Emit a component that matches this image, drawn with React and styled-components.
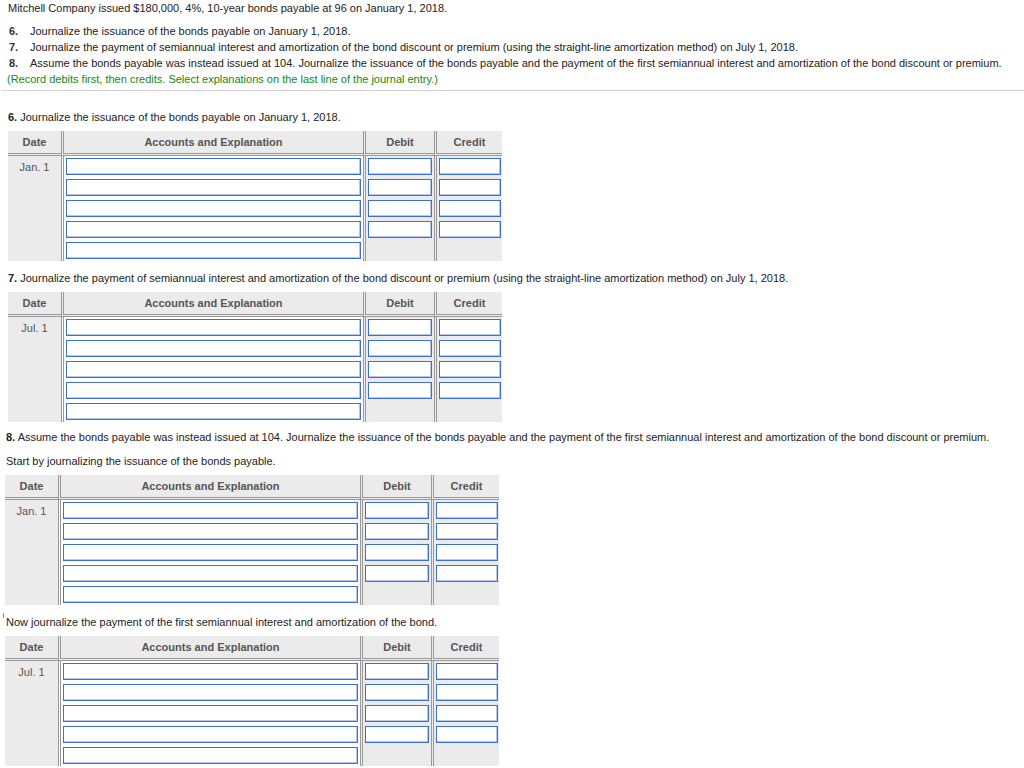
import React from 'react';
import styled, { createGlobalStyle } from 'styled-components';

const GlobalStyle = createGlobalStyle`
  html, body {
    margin: 0;
    padding: 0;
    background: #fff;
  }
  body {
    font-family: "Liberation Sans", Arial, sans-serif;
    font-size: 11px;
    color: #222;
  }
`;

const intro = [
  { n: '6.', text: 'Journalize the issuance of the bonds payable on January 1, 2018.' },
  { n: '7.', text: 'Journalize the payment of semiannual interest and amortization of the bond discount or premium (using the straight-line amortization method) on July 1, 2018.' },
  { n: '8.', text: 'Assume the bonds payable was instead issued at 104. Journalize the issuance of the bonds payable and the payment of the first semiannual interest and amortization of the bond discount or premium.' },
];

const App = () => {
  return (
    <>
      <GlobalStyle />
      <Page>
        <Intro>Mitchell Company issued $180,000, 4%, 10-year bonds payable at 96 on January 1, 2018.</Intro>
        <List>
          {intro.map(item => (
            <ListItem key={item.n}>
              <Num>{item.n}</Num>
              <span>{item.text}</span>
            </ListItem>
          ))}
        </List>
        <Note>(Record debits first, then credits. Select explanations on the last line of the journal entry.)</Note>
      </Page>
      <Rule />
      <Page>
        <Title $top={18}><b>6.</b> Journalize the issuance of the bonds payable on January 1, 2018.</Title>
        <Journal date="Jan. 1" />

        <Title $top={9}><b>7.</b> Journalize the payment of semiannual interest and amortization of the bond discount or premium (using the straight-line amortization method) on July 1, 2018.</Title>
        <Journal date="Jul. 1" />

        <Title $top={7} $shift={-2}><b>8.</b> Assume the bonds payable was instead issued at 104. Journalize the issuance of the bonds payable and the payment of the first semiannual interest and amortization of the bond discount or premium.</Title>
        <Title $top={8} $shift={-2}>Start by journalizing the issuance of the bonds payable.</Title>
        <Journal date="Jan. 1" shift={-3} />

        <Title $top={9} $shift={-2}><Tick />Now journalize the payment of the first semiannual interest and amortization of the bond.</Title>
        <Journal date="Jul. 1" shift={-3} />
      </Page>
    </>
  );
};

const Journal = ({ date, shift = 0 }) => (
  <Table $shift={shift}>
    <HeadCell>Date</HeadCell>
    <HeadCell $split>Accounts and Explanation</HeadCell>
    <HeadCell $split>Debit</HeadCell>
    <HeadCell $split>Credit</HeadCell>

    <DateCell>{date}</DateCell>
    <InputCol $split>
      {[0, 1, 2, 3, 4].map(i => <Field key={i} />)}
    </InputCol>
    <InputCol $split $gray>
      {[0, 1, 2, 3].map(i => <Field key={i} />)}
    </InputCol>
    <InputCol $split $gray $right={1}>
      {[0, 1, 2, 3].map(i => <Field key={i} />)}
    </InputCol>
  </Table>
);

export default App;

const Page = styled.div`
  padding: 0 0 0 8px;
`;

const Intro = styled.div`
  line-height: 15px;
  padding-top: 1px;
`;

const List = styled.div`
  margin-top: 7px;
`;

const ListItem = styled.div`
  display: flex;
  line-height: 16px;
`;

const Num = styled.b`
  width: 22px;
  padding-left: 1px;
  box-sizing: border-box;
  flex-shrink: 0;
  color: #333;
`;

const Note = styled.div`
  color: #118a11;
  line-height: 16px;
  margin-left: -1px;
`;

const Rule = styled.div`
  height: 1px;
  background: #d3d3da;
  margin-top: 3px;
  margin-left: 1px;
`;

const Title = styled.div`
  line-height: 16px;
  margin-top: ${p => p.$top}px;
  margin-left: ${p => p.$shift || 0}px;
  margin-bottom: 6px;
  white-space: nowrap;

  b {
    color: #222;
  }
`;

const Tick = styled.span`
  display: inline-block;
  width: 1px;
  height: 5px;
  background: #888;
  vertical-align: top;
  margin: -1px 2px 0 -3px;
`;

const Table = styled.div`
  display: grid;
  grid-template-columns: 53px 302px 71px 68px;
  margin-left: ${p => p.$shift}px;
  width: 494px;
  background: #fff;
`;

const HeadCell = styled.div`
  height: 22px;
  line-height: 22px;
  background: #ebebeb;
  border-bottom: 3px double #999;
  border-left: ${p => (p.$split ? '3px double #999' : 'none')};
  text-align: center;
  font-size: 11px;
  font-weight: bold;
  color: #555;
`;

const DateCell = styled.div`
  background: #ebebeb;
  text-align: center;
  font-size: 11px;
  color: #555;
  padding-top: 5px;
  line-height: 13px;
`;

const InputCol = styled.div`
  display: flex;
  flex-direction: column;
  gap: 4px;
  padding: 2px ${p => (p.$right !== undefined ? p.$right : 2)}px 2px 2px;
  border-left: 3px double #999;
  background: ${p => (p.$gray ? '#ebebeb' : '#fff')};
`;

const Field = styled.div`
  height: 17px;
  box-sizing: border-box;
  background: #fff;
  border: 1px solid #3d6fd4;
  box-shadow: inset -1px -1px 0 #b5c8ef;
`;
